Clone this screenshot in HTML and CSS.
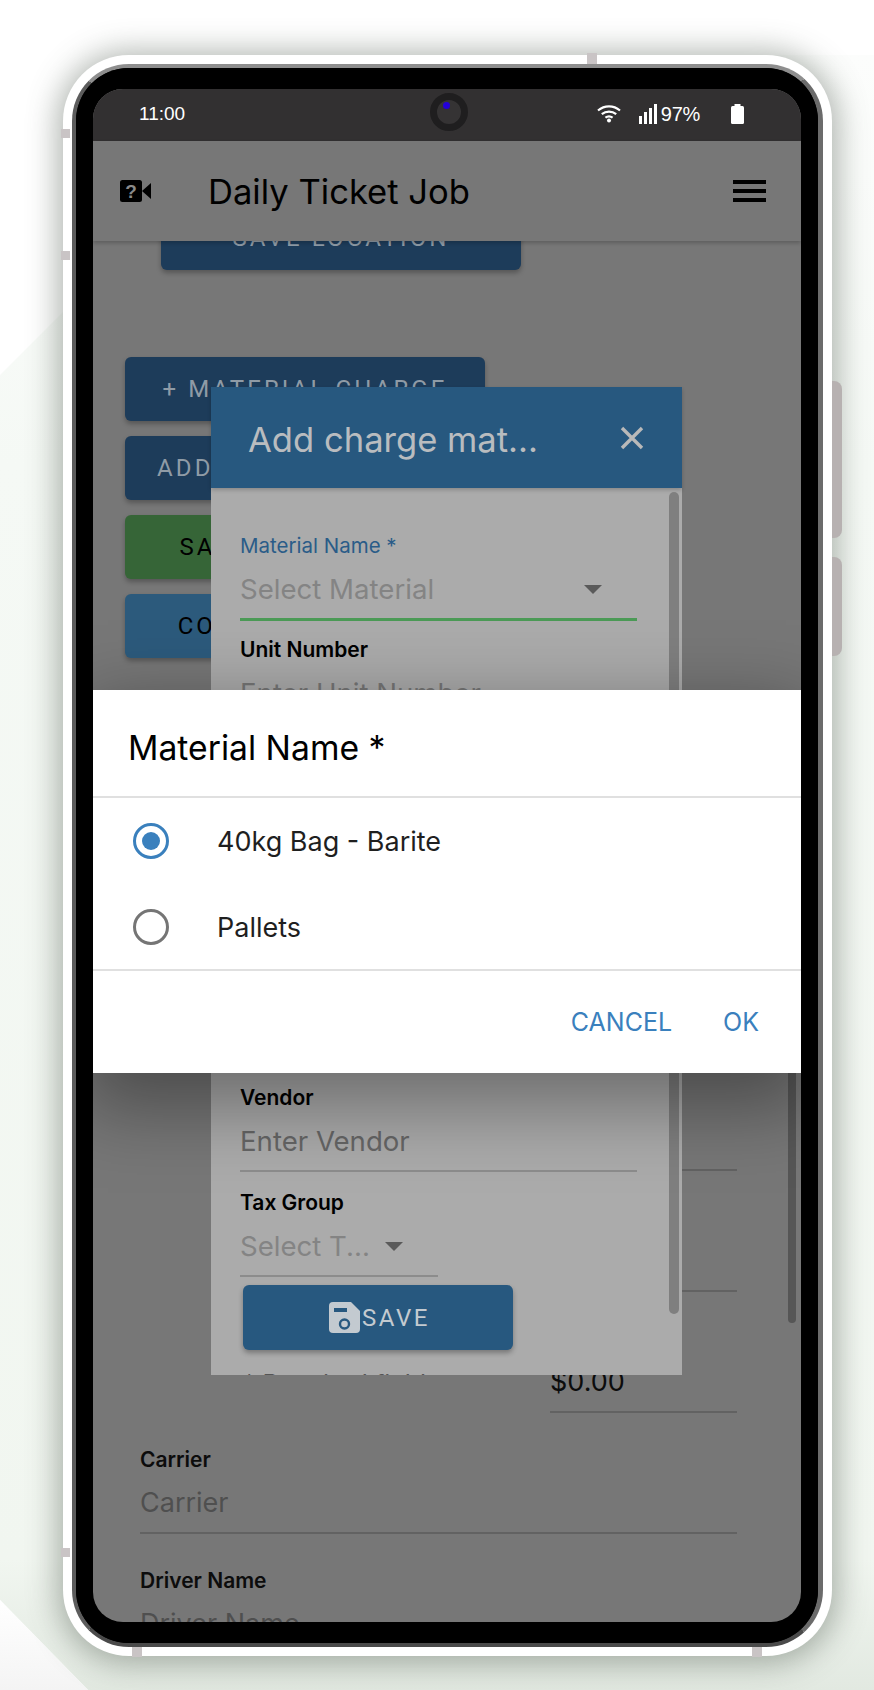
FILE: index.html
```html
<!DOCTYPE html>
<html>
  <head>
    <title>Daily Ticket Job</title>
    <link rel="stylesheet" href="styles.css">
  </head>
  <body>
    <svg class="backdrop" width="874" height="1690" viewBox="0 0 874 1690">
      <defs>
        <linearGradient id="pale" x1="0" y1="0" x2="0" y2="1">
          <stop offset="0" stop-color="#fcfdfc" />
          <stop offset="0.25" stop-color="#f5f9f5" />
          <stop offset="0.92" stop-color="#f1f6f0" />
          <stop offset="1" stop-color="#e2e9e1" />
        </linearGradient>
        <linearGradient id="corner" x1="0" y1="0" x2="0" y2="1">
          <stop offset="0" stop-color="#fff" />
          <stop offset="1" stop-color="#f4f4f4" />
        </linearGradient>
      </defs>
      <polygon points="0,375 320,55 874,55 874,1690 88,1690 0,1600" fill="url(#pale)" />
      <polygon points="0,1600 88,1690 0,1690" fill="url(#corner)" />
    </svg>

    <div class="phone">
      <span class="tick tick-left-1"></span>
      <span class="tick tick-left-2"></span>
      <span class="tick tick-left-3"></span>
      <span class="tick tick-top"></span>
      <span class="tick tick-bottom-1"></span>
      <span class="tick tick-bottom-2"></span>
      <span class="side-key side-key-1"></span>
      <span class="side-key side-key-2"></span>

      <div class="edge">
        <div class="bezel">
          <div class="screen">
            <div class="status-bar">
              <span class="clock">11:00</span>
              <div class="status-icons">
                <svg class="wifi" width="24" height="19" viewBox="0 0 24 19" fill="none" stroke="#fff" stroke-width="2.2">
                  <path d="M1 6.5C7.5 1 16.5 1 23 6.5" />
                  <path d="M4.8 10.2C9 6.7 15 6.7 19.2 10.2" />
                  <path d="M8.4 13.6C10.6 12 13.4 12 15.6 13.6" />
                  <circle cx="12" cy="16.6" r="2" fill="#fff" stroke="none" />
                </svg>
                <svg class="signal" width="19" height="20" viewBox="0 0 19 20" fill="#fff">
                  <rect x="0" y="12" width="3" height="8" />
                  <rect x="5" y="8" width="3" height="12" />
                  <rect x="10" y="4" width="3" height="16" />
                  <rect x="15" y="0" width="3" height="20" />
                </svg>
                <span class="battery-text">97%</span>
                <svg class="battery" width="13" height="20" viewBox="0 0 13 20" fill="#fff">
                  <rect x="3.5" y="0" width="6" height="3" />
                  <rect x="0" y="2" width="13" height="18" rx="1.5" />
                </svg>
              </div>
              <span class="camera"><span class="camera-dot"></span></span>
            </div>

            <header class="app-bar">
              <svg class="help-icon" width="32" height="24" viewBox="0 0 32 24">
                <rect x="0" y="1" width="22" height="22" rx="2.5" fill="#000" />
                <polygon points="22,12 31,4 31,20" fill="#000" />
                <text x="11" y="19" text-anchor="middle" class="help-mark">?</text>
              </svg>
              <h1 class="app-title">Daily Ticket Job</h1>
              <div class="menu-icon"><span></span><span></span><span></span></div>
            </header>

            <div class="page">
              <button class="btn btn-navy btn-location">SAVE LOCATION</button>
              <div class="btn-stack">
                <button class="btn btn-navy">+ MATERIAL CHARGE</button>
                <button class="btn btn-navy">ADD LABOUR CHARGE</button>
                <button class="btn btn-green">SAVE AND SUBMIT</button>
                <button class="btn btn-sky">COMPLETE TICKET</button>
              </div>

              <div class="field field-short field-first">
                <div class="field-label"></div>
                <div class="field-input"></div>
              </div>
              <div class="field field-short">
                <div class="field-label"></div>
                <div class="field-input"></div>
              </div>
              <div class="field field-short">
                <div class="field-label"></div>
                <div class="field-input field-value">$0.00</div>
              </div>
              <div class="field">
                <div class="field-label">Carrier</div>
                <div class="field-input">Carrier</div>
              </div>
              <div class="field">
                <div class="field-label">Driver Name</div>
                <div class="field-input">Driver Name</div>
              </div>

              <span class="page-scroll"></span>
            </div>

            <!-- charge material dialog, sits behind the picker -->
            <section class="charge-dialog">
              <div class="charge-head">
                <h2 class="charge-title">Add charge mat...</h2>
                <svg class="close-icon" width="26" height="26" viewBox="0 0 26 26" stroke="#b9b9b9" stroke-width="3.4">
                  <path d="M3 3L23 23M23 3L3 23" />
                </svg>
              </div>
              <div class="charge-body">
                <div class="modal-label modal-label-active">Material Name *</div>
                <div class="modal-select modal-select-active">
                  <span>Select Material</span>
                  <span class="caret caret-material"></span>
                </div>
                <div class="modal-label modal-gap">Unit Number</div>
                <div class="modal-input modal-input-muted">Enter Unit Number</div>
                <div class="modal-label modal-vendor">Vendor</div>
                <div class="modal-input">Enter Vendor</div>
                <div class="modal-label modal-tax">Tax Group</div>
                <div class="modal-select modal-select-short">
                  <span>Select T...</span>
                  <span class="caret"></span>
                </div>
                <button class="save-btn">
                  <svg width="31" height="31" viewBox="0 0 31 31">
                    <path d="M4 0H22L31 9V27Q31 31 27 31H4Q0 31 0 27V4Q0 0 4 0Z" fill="#c3cad0" />
                    <rect x="5" y="6" width="13" height="4" fill="#27587f" />
                    <circle cx="15.5" cy="22" r="4.5" fill="none" stroke="#27587f" stroke-width="2.4" />
                  </svg>
                  <span>SAVE</span>
                </button>
                <div class="required-note">* Required fields</div>
              </div>
              <span class="charge-scroll"></span>
            </section>

            <!-- material picker sheet -->
            <section class="picker">
              <h2 class="picker-title">Material Name *</h2>
              <div class="picker-list">
                <div class="picker-row">
                  <span class="radio radio-on"></span>
                  <span>40kg Bag - Barite</span>
                </div>
                <div class="picker-row">
                  <span class="radio"></span>
                  <span>Pallets</span>
                </div>
              </div>
              <div class="picker-actions">
                <span>CANCEL</span>
                <span>OK</span>
              </div>
            </section>
          </div>
        </div>
      </div>
    </div>
  </body>
</html>
```

FILE: styles.css
```css
body {
  margin: 0;
  width: 874px;
  height: 1690px;
  overflow: hidden;
  position: relative;
  background: #fff;
  font-family: Inter, Roboto, "Liberation Sans", sans-serif;
}

.backdrop { position: absolute; top: 0; left: 0; }

/* device frame */
.phone {
  position: relative;
  box-sizing: border-box;
  width: 769px;
  height: 1601px;
  margin: 55px 0 0 63px;
  padding: 9px;
  background: #fff;
  border-radius: 66px;
  box-shadow: 0 2px 30px 6px rgba(70, 80, 70, 0.42);
}

.edge {
  box-sizing: border-box;
  height: 100%;
  border-style: solid;
  border-width: 4px 5px 4px 4px;
  border-color: #8e8e8e #6b6b6b #4a4a4a #5c5c5c;
  border-radius: 57px;
  background: #000;
}

.bezel {
  box-sizing: border-box;
  height: 100%;
  padding: 21px 17px;
  background: #000;
  border-radius: 53px;
}

.tick { position: absolute; background: #c9c4c5; }
.tick-left-1 { left: -2px; top: 74px; width: 9px; height: 9px; }
.tick-left-2 { left: -2px; top: 196px; width: 9px; height: 9px; }
.tick-left-3 { left: -2px; top: 1493px; width: 9px; height: 9px; }
.tick-top { left: 524px; top: -2px; width: 10px; height: 11px; }
.tick-bottom-1 { left: 69px; bottom: -1px; width: 10px; height: 10px; }
.tick-bottom-2 { left: 689px; bottom: -1px; width: 10px; height: 10px; }

.side-key {
  position: absolute;
  left: 769px;
  width: 10px;
  background: #b7b1b1;
  border-radius: 0 8px 8px 0;
}
.side-key-1 { top: 326px; height: 157px; }
.side-key-2 { top: 502px; height: 99px; }

.screen {
  position: relative;
  display: flex;
  flex-direction: column;
  height: 100%;
  overflow: hidden;
  background: #777;
  border-radius: 30px;
}

/* status bar */
.status-bar {
  position: relative;
  flex: none;
  display: flex;
  align-items: center;
  justify-content: space-between;
  height: 52px;
  padding: 0 57px 2px 46px;
  box-sizing: border-box;
  background: #323031;
  color: #fff;
}

.clock { font-family: "Liberation Sans", sans-serif; font-size: 19px; }

.status-icons { display: flex; align-items: center; }
.wifi { margin-right: 18px; margin-top: -2px; }
.signal { margin-right: 3px; }
.battery-text { font-family: "Liberation Sans", sans-serif; font-size: 20px; margin-right: 31px; letter-spacing: -0.3px; }

.camera {
  position: absolute;
  left: 337px;
  top: 4px;
  width: 38px;
  height: 38px;
  box-sizing: border-box;
  border: 7px solid #1f1e1f;
  border-radius: 50%;
  background: #353334;
}

.camera-dot {
  position: absolute;
  left: 6px;
  top: 2px;
  width: 7px;
  height: 7px;
  border-radius: 50%;
  background: #2400d8;
}

/* app bar */
.app-bar {
  position: relative;
  z-index: 2;
  flex: none;
  display: flex;
  align-items: center;
  height: 100px;
  padding: 0 35px 0 27px;
  box-sizing: border-box;
  background: #777;
  box-shadow: 0 2px 4px rgba(0, 0, 0, 0.22);
}

.help-mark { font-family: "Liberation Sans", sans-serif; font-weight: 700; font-size: 19px; fill: #8a8a8a; }

.app-title {
  flex: 1;
  margin: 0 0 0 56px;
  font-size: 34.6px;
  font-weight: 400;
  color: #000;
}

.menu-icon { display: flex; flex-direction: column; gap: 5.5px; width: 33px; }
.menu-icon span { height: 3.5px; background: #000; }

/* page under the dialogs */
.page {
  position: relative;
  flex: 1;
  display: flex;
  flex-direction: column;
  min-height: 0;
  padding: 0 64px 0 47px;
}

.btn {
  flex: none;
  width: 360px;
  height: 64px;
  border: none;
  border-radius: 6px;
  font-family: Roboto, sans-serif;
  font-size: 24px;
  letter-spacing: 3.1px;
  box-shadow: 0 3px 5px rgba(0, 0, 0, 0.28);
}

.btn-navy { background: #1d3c5a; color: #8f9ba6; }
.btn-green { background: #366537; color: #000; }
.btn-sky { background: #2c5a7c; color: #000; }

.btn-location { margin: -35px 0 0 21px; }

.btn-stack {
  flex: none;
  display: flex;
  flex-direction: column;
  gap: 15px;
  margin: 87px 0 0 -15px;
}

.field { flex: none; margin-top: 35px; }
.field-first { margin-top: 427px; }
.field-short { align-self: flex-end; width: 187px; }

.field-label {
  height: 24px;
  line-height: 24px;
  font-size: 21px;
  font-weight: 600;
  color: #0c0c0c;
}

.field-input {
  height: 40px;
  margin-top: 11px;
  padding-bottom: 9px;
  line-height: 40px;
  font-size: 27px;
  color: #4f4f4f;
  border-bottom: 2px solid #626262;
}

.field-value { color: #0c0c0c; }

.page-scroll {
  position: absolute;
  left: 695px;
  top: 760px;
  width: 8px;
  height: 322px;
  background: #565656;
  border-radius: 0 0 4px 4px;
}

/* charge material dialog */
.charge-dialog {
  position: absolute;
  z-index: 3;
  left: 118px;
  top: 298px;
  width: 471px;
  height: 988px;
  display: flex;
  flex-direction: column;
  background: #ababab;
}

.charge-head {
  flex: none;
  display: flex;
  align-items: center;
  justify-content: space-between;
  height: 101px;
  padding: 0 37px;
  box-sizing: border-box;
  background: #27587f;
  box-shadow: 0 2px 4px rgba(0, 0, 0, 0.2);
}

.charge-title {
  margin: 0;
  padding-top: 2px;
  font-size: 34.6px;
  font-weight: 400;
  color: #b9bcbf;
}

.charge-body {
  flex: 1;
  min-height: 0;
  overflow: hidden;
  padding: 46px 45px 0 29px;
}

.modal-label {
  height: 24px;
  line-height: 24px;
  font-size: 21px;
  font-weight: 600;
  color: #000;
}

.modal-label-active { font-weight: 400; font-size: 20.5px; color: #2a5c88; }
.modal-gap { margin-top: 17px; }
.modal-vendor { margin-top: 362px; }
.modal-tax { margin-top: 19px; }

.modal-input,
.modal-select {
  height: 40px;
  margin-top: 11px;
  padding-bottom: 9px;
  line-height: 40px;
  font-size: 27.6px;
  color: #666;
  border-bottom: 2px solid #8c8c8c;
}

.modal-input-muted { color: #777; }

.modal-select {
  display: flex;
  align-items: center;
  justify-content: space-between;
  color: #848484;
}

.modal-select-active { border-bottom: 3px solid #4b9a56; padding-right: 35px; }
.modal-select-short { width: 198px; justify-content: flex-start; gap: 15px; }

.caret {
  width: 0;
  height: 0;
  border-left: 9px solid transparent;
  border-right: 9px solid transparent;
  border-top: 9px solid #5a5a5a;
}

.save-btn {
  display: flex;
  align-items: center;
  justify-content: center;
  gap: 2px;
  width: 270px;
  height: 65px;
  margin: 8px 0 0 3px;
  padding: 0 0 0 3px;
  border: none;
  border-radius: 6px;
  background: #27587f;
  color: #c3cad0;
  font-family: Roboto, sans-serif;
  font-size: 24px;
  letter-spacing: 2.6px;
  box-shadow: 0 3px 5px rgba(0, 0, 0, 0.3);
}

.required-note {
  margin: 18px 0 0 3px;
  font-size: 25px;
  line-height: 32px;
  color: #555;
}

.charge-scroll {
  position: absolute;
  left: 458px;
  top: 105px;
  width: 10px;
  height: 822px;
  background: #7f7f7f;
  border-radius: 5px;
}

/* material picker sheet */
.picker {
  position: absolute;
  z-index: 4;
  left: 0;
  right: 0;
  top: 601px;
  height: 383px;
  display: flex;
  flex-direction: column;
  background: #fff;
  box-shadow: 0 25px 70px 10px rgba(0, 0, 0, 0.36);
}

.picker-title {
  flex: none;
  height: 106px;
  margin: 0;
  padding-left: 35px;
  box-sizing: border-box;
  line-height: 115px;
  font-size: 33.7px;
  font-weight: 400;
  color: #000;
}

.picker-list {
  flex: none;
  height: 175px;
  border-top: 2px solid #e0e0e0;
  border-bottom: 2px solid #e0e0e0;
  box-sizing: border-box;
  padding-top: 0;
}

.picker-row {
  display: flex;
  align-items: center;
  gap: 48px;
  height: 86px;
  padding-left: 40px;
  font-size: 27px;
  color: #1f1f1f;
}

.radio {
  position: relative;
  flex: none;
  width: 36px;
  height: 36px;
  box-sizing: border-box;
  border: 3.5px solid #757575;
  border-radius: 50%;
}

.radio-on { border-color: #3a80bd; }

.radio-on::after {
  content: "";
  position: absolute;
  left: 5.5px;
  top: 5.5px;
  width: 18px;
  height: 18px;
  border-radius: 50%;
  background: #3a80bd;
}

.picker-actions {
  flex: 1;
  display: flex;
  align-items: center;
  justify-content: flex-end;
  gap: 51px;
  padding: 0 42px 0 0;
  font-size: 25px;
  color: #3a80bd;
}
```
